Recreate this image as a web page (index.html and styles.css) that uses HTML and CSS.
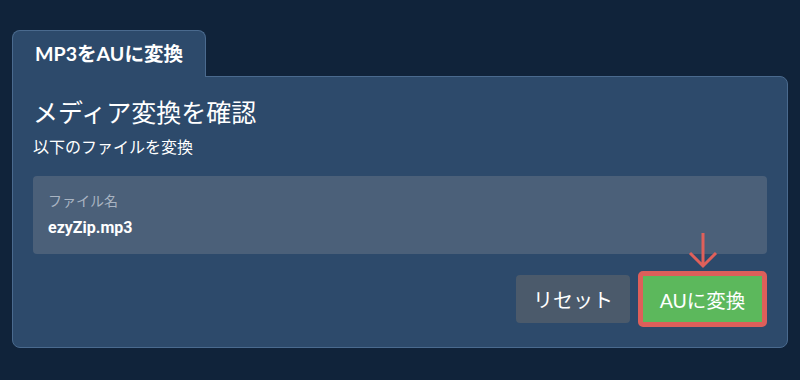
FILE: index.html
```html
<!DOCTYPE html>
<html lang="ja">
<head>
    <meta charset="UTF-8">
    <meta name="viewport" content="width=device-width, initial-scale=1.0">
    <title>MP3をAUに変換</title>
    <link rel="stylesheet" href="styles.css">
</head>
<body>
    <div class="converter">
        <div class="tab">MP3をAUに変換</div>
        <div class="panel">
            <h2>メディア変換を確認</h2>
            <p class="sub">以下のファイルを変換</p>
            <div class="file-box">
                <div class="file-label">ファイル名</div>
                <div class="file-name">ezyZip.mp3</div>
            </div>
            <div class="actions">
                <button class="reset-btn">リセット</button>
                <div class="convert-wrap">
                    <svg class="arrow" width="30" height="38" viewBox="0 0 30 38">
                        <path d="M15 1 V34 M2 21 L15 34 L28 21" fill="none" stroke="#e0605a" stroke-width="3"/>
                    </svg>
                    <button class="convert-btn">AUに変換</button>
                </div>
            </div>
        </div>
    </div>
</body>
</html>
```

FILE: styles.css
```css
body {
    margin: 0;
    background-color: #10233a;
    font-family: Lato, "Noto Sans CJK JP", sans-serif;
    color: #fff;
}

.converter {
    padding: 30px 12px 0 12px;
}

.tab {
    display: inline-block;
    position: relative;
    z-index: 1;
    height: 46px;
    line-height: 46px;
    padding: 0 22px 0 22px;
    margin-bottom: -1px;
    background: #2d4a6b;
    border: 1px solid #4a6a8e;
    border-bottom: none;
    border-radius: 8px 8px 0 0;
    font-size: 19.6px;
    font-weight: bold;
}

.panel {
    background: #2d4a6b;
    border: 1px solid #4a6a8e;
    border-radius: 0 8px 8px 8px;
    padding: 17px 20px 20px 20px;
}

.panel h2 {
    margin: 0;
    font-size: 25px;
    font-weight: normal;
    line-height: 36px;
}

.sub {
    margin: 6px 0 0 0;
    font-size: 16px;
    line-height: 22px;
}

.file-box {
    margin-top: 18px;
    background: #4b6079;
    border-radius: 4px;
    height: 78px;
    padding: 15px 15px 0 15px;
    box-sizing: border-box;
}

.file-label {
    font-size: 14px;
    color: #a9b4c2;
    line-height: 20px;
}

.file-name {
    margin-top: 6px;
    font-family: Roboto, "Noto Sans CJK JP", sans-serif;
    font-size: 16px;
    font-weight: bold;
    line-height: 22px;
}

.actions {
    display: flex;
    justify-content: flex-end;
    align-items: center;
    gap: 8px;
    margin-top: 17px;
}

.reset-btn {
    width: 114px;
    height: 48px;
    background: #4b5a6b;
    border: none;
    border-radius: 4px;
    color: #fff;
    font-family: Lato, "Noto Sans CJK JP", sans-serif;
    font-size: 20px;
    cursor: pointer;
}

.convert-wrap {
    position: relative;
}

.arrow {
    position: absolute;
    left: 50%;
    top: -39px;
    margin-left: -15px;
}

.convert-btn {
    display: block;
    width: 129px;
    height: 56px;
    background: #5cb85c;
    border: 5px solid #dd5f5a;
    border-radius: 5px;
    color: #fff;
    font-family: Lato, "Noto Sans CJK JP", sans-serif;
    font-size: 19.5px;
    cursor: pointer;
}
```
